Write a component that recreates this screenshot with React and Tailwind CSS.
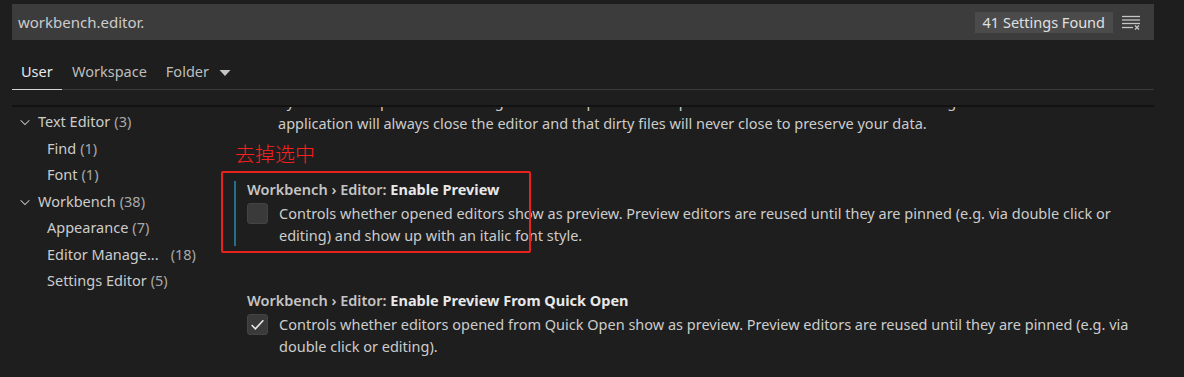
const tocItems = [
  { label: 'Text Editor', count: 3, level: 0 },
  { label: 'Find', count: 1, level: 1 },
  { label: 'Font', count: 1, level: 1 },
  { label: 'Workbench', count: 38, level: 0 },
  { label: 'Appearance', count: 7, level: 1 },
  { label: 'Editor Manage...', count: 18, level: 1, gap: true },
  { label: 'Settings Editor', count: 5, level: 1 },
];

function Chevron() {
  return (
    <svg width="14" height="14" viewBox="0 0 16 16" className="shrink-0">
      <path d="M3 6l5 5 5-5" fill="none" stroke="#c5c5c5" strokeWidth="1.2" />
    </svg>
  );
}

function ClearAllIcon() {
  return (
    <svg width="20" height="16" viewBox="0 0 20 16">
      <g stroke="#c5c5c5" strokeWidth="1.3" fill="none">
        <path d="M1 2.5h18" />
        <path d="M1 6h18" />
        <path d="M1 9.5h18" />
        <path d="M1 13.5h11" />
        <path d="M14 11.5l4 4M18 11.5l-4 4" />
      </g>
    </svg>
  );
}

function Checkbox({ checked }) {
  return (
    <div className="mt-[1px] w-[21px] h-[21px] shrink-0 rounded-[3px] bg-[#3a3a3a] border border-[#444] flex items-center justify-center">
      {checked && (
        <svg width="17" height="17" viewBox="0 0 16 16">
          <path d="M2.5 8.5l3.5 3.5 7.5-8" fill="none" stroke="#e8e8e8" strokeWidth="1.5" />
        </svg>
      )}
    </div>
  );
}

function Setting({ label, checked, lines, focused }) {
  return (
    <div className="flex">
      <div className={`ml-[1px] w-[2px] mt-[3px] ${focused ? 'bg-[#23708c]' : ''}`} />
      <div className="pl-[11px]">
        <div className="h-[22px] leading-[22px] whitespace-nowrap">
          <span className="font-semibold text-[#c5c5c5]">Workbench › Editor: </span>
          <span className="font-bold text-[#e8e8e8]">{label}</span>
        </div>
        <div className="mt-[2px] flex gap-[11px]">
          <Checkbox checked={checked} />
          <div>
            {lines.map((line) => (
              <div key={line} className="h-[22px] leading-[22px] whitespace-nowrap">
                {line}
              </div>
            ))}
          </div>
        </div>
      </div>
    </div>
  );
}

export default function App() {
  return (
    <div className="w-[1184px] h-[377px] overflow-hidden bg-[#1e1e1e] text-[#cccccc] font-['Noto_Sans','Noto_Sans_CJK_SC',sans-serif] text-[14.5px]">
      <div className="w-[1154px] pl-3 h-full flex flex-col">
        {/* search */}
        <div className="mt-1 h-9 shrink-0 bg-[#3c3c3c] flex items-center pl-[6px] pr-[13px]">
          <span className="text-[15px] text-[#cccccc]">workbench.editor.</span>
          <span className="ml-auto h-[21px] leading-[21px] px-[8px] bg-[#4b4b4b] text-[14.5px] text-[#e0e0e0]">
            41 Settings Found
          </span>
          <span className="ml-[8px] flex items-center">
            <ClearAllIcon />
          </span>
        </div>

        {/* tabs */}
        <div className="h-[50px] shrink-0 flex items-end border-b border-[#3a3a3a] text-[14.5px]">
          <div className="flex">
            <div className="w-[50px] pl-[9px] pb-[6px] border-b border-[#d4d4d4] -mb-px text-[#e8e8e8]">
              User
            </div>
            <div className="pl-[10px] pb-[6px] text-[#bdbdbd]">Workspace</div>
            <div className="pl-[19px] pb-[6px] text-[#bdbdbd] flex items-center">
              Folder
              <svg width="12" height="8" viewBox="0 0 12 8" className="ml-[10px] mt-[1px]">
                <path d="M0.5 1h11L6 7z" fill="#c5c5c5" />
              </svg>
            </div>
          </div>
        </div>

        <div className="h-[15px] shrink-0" />
        <div className="h-[2px] shrink-0 bg-[#121212]" />

        {/* body */}
        <div className="flex-1 flex overflow-hidden relative">
          <div className="w-[221px] shrink-0 pt-[2px]">
            {tocItems.map((item) => (
              <div
                key={item.label}
                className={`h-[26.5px] flex items-center whitespace-nowrap ${item.level === 0 ? 'pl-[6px]' : 'pl-[35px]'}`}
              >
                {item.level === 0 && (
                  <span className="mr-[6px] flex">
                    <Chevron />
                  </span>
                )}
                <span className="text-[#cccccc]">{item.label}</span>
                <span className={`text-[#a8a8a8] ${item.gap ? 'ml-[12px]' : 'ml-[4px]'}`}>
                  ({item.count})
                </span>
              </div>
            ))}
          </div>

          <div className="flex-1 overflow-hidden">
            <div className="pl-[45px]">
              {/* previous line scrolled under the header: only descenders show */}
              <div className="h-[5px] overflow-hidden">
                <div className="-mt-[17.5px] h-[22px] leading-[22px] whitespace-nowrap">
                  by some other process. Disabling this will keep the editor open on such an event. Note that deleting from within the
                </div>
              </div>
              <div className="h-[22px] leading-[22px] whitespace-nowrap">
                application will always close the editor and that dirty files will never close to preserve your data.
              </div>
            </div>
            <div className="mt-[44px]">
              <Setting
                label="Enable Preview"
                focused
                lines={[
                  'Controls whether opened editors show as preview. Preview editors are reused until they are pinned (e.g. via double click or',
                  'editing) and show up with an italic font style.',
                ]}
              />
            </div>
            <div className="mt-[43px]">
              <Setting
                label="Enable Preview From Quick Open"
                checked
                lines={[
                  'Controls whether editors opened from Quick Open show as preview. Preview editors are reused until they are pinned (e.g. via',
                  'double click or editing).',
                ]}
              />
            </div>
          </div>

          {/* annotation drawn on top of the screenshot */}
          <div className="absolute left-[223px] top-[35px] text-[20px] leading-[26px] font-light text-[#ff1f1f]">
            去掉选中
          </div>
          <div className="absolute left-[209px] top-[64px] w-[310px] h-[82px] border-2 border-[#e8231c] rounded-[2px]" />
        </div>
      </div>
    </div>
  );
}
